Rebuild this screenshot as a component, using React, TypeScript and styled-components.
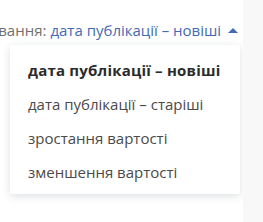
import React from 'react';
import styled, { createGlobalStyle } from 'styled-components';

const GlobalStyle = createGlobalStyle`
  html, body {
    margin: 0;
    padding: 0;
    background: #ffffff;
  }
  body {
    font-family: 'Open Sans', 'Noto Sans', sans-serif;
  }
`;

const Page = styled.div`
  display: flex;
  width: 263px;
  height: 222px;
  overflow: hidden;
`;

const Main = styled.div`
  width: 243px;
  flex-shrink: 0;
  display: flex;
  flex-direction: column;
  overflow: hidden;
`;

const Aside = styled.div`
  flex: 1;
  background: #f8f8f8;
`;

const SortBar = styled.div`
  display: flex;
  align-items: center;
  height: 20px;
  margin-top: 20px;
  white-space: nowrap;
  font-size: 15px;
`;

const SortLabel = styled.span`
  color: #6f6f6f;
  margin-left: -44px;
  margin-right: 4px;
`;

const SortValue = styled.span`
  color: #4469b8;
`;

const Caret = styled.svg`
  margin-left: 7px;
  width: 10px;
  height: 5px;
  fill: #4469b8;
`;

const Menu = styled.ul`
  list-style: none;
  margin: 5px 0 0 10px;
  padding: 8px 0 5px;
  width: 230px;
  background: #ffffff;
  border-radius: 3px;
  box-shadow: 0 2px 8px rgba(40, 60, 70, 0.16);
`;

const MenuItem = styled.li<{ $active?: boolean }>`
  display: flex;
  align-items: center;
  height: 34px;
  padding-left: 18px;
  font-size: 15px;
  font-weight: ${(p) => (p.$active ? 700 : 400)};
  letter-spacing: ${(p) => (p.$active ? '0.2px' : '0')};
  color: ${(p) => (p.$active ? '#2b2b2b' : '#4a4a4a')};
  white-space: nowrap;
`;

const options = [
  'дата публікації – новіші',
  'дата публікації – старіші',
  'зростання вартості',
  'зменшення вартості',
];

export default function App() {
  return (
    <Page>
      <GlobalStyle />
      <Main>
        <SortBar>
          <SortLabel>Сортування:</SortLabel>
          <SortValue>дата публікації – новіші</SortValue>
          <Caret viewBox="0 0 10 5">
            <path d="M0 5 L5 0 L10 5 Z" />
          </Caret>
        </SortBar>
        <Menu>
          {options.map((o, i) => (
            <MenuItem key={o} $active={i === 0}>
              {o}
            </MenuItem>
          ))}
        </Menu>
      </Main>
      <Aside />
    </Page>
  );
}
